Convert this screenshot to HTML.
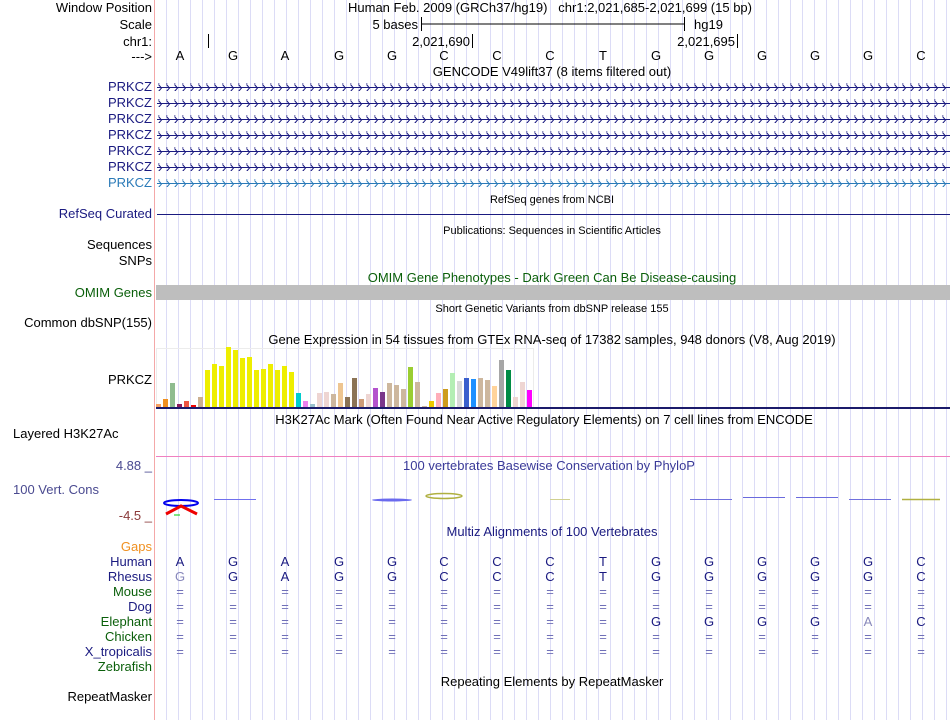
<!DOCTYPE html>
<html><head><meta charset="utf-8"><style>
*{margin:0;padding:0}
body{width:950px;height:720px;background:#fff;position:relative;overflow:hidden;font-family:"Liberation Sans",sans-serif;font-size:13px;color:#000}
#grid{position:absolute;left:155px;top:0;width:795px;height:720px;background:repeating-linear-gradient(to right,transparent 0,transparent 11px,#dcdcf6 11px,#dcdcf6 12px)}
#sep{position:absolute;left:154px;top:0;width:1px;height:720px;background:#f4a8a8}
.l{position:absolute;right:798px;white-space:nowrap;line-height:14px;text-align:right}
.c{position:absolute;white-space:nowrap;line-height:14px;transform:translateX(-50%)}
.s{font-size:11px}
.nv{color:#1a1a80}
.gr{color:#0a5f0a}
.b{position:absolute;white-space:nowrap;line-height:14px;transform:translateX(-50%)}
svg{position:absolute;left:0;top:0}
</style></head><body>
<div id="grid"></div><div id="sep"></div>
<svg width="950" height="720">
<defs>
<pattern id="chv" x="157" y="-4" width="8" height="8" patternUnits="userSpaceOnUse"><path d="M1.5,0.5 L4.5,4 L1.5,7.5" fill="none" stroke="#1a1a80" stroke-width="1"/></pattern>
<pattern id="chb" x="157" y="-4" width="8" height="8" patternUnits="userSpaceOnUse"><path d="M1.5,0.5 L4.5,4 L1.5,7.5" fill="none" stroke="#2a7ab8" stroke-width="1"/></pattern>
</defs>
<path d="M421.5,17V31M421,24H684M684.5,17V31M208.5,34V48M472.5,34V48M737.5,34V48" stroke="#000" stroke-width="1"/>
<g>
<rect x="157" y="83" width="793" height="8" fill="url(#chv)"/><line x1="157" y1="87.5" x2="950" y2="87.5" stroke="#1a1a80"/>
<rect x="157" y="99" width="793" height="8" fill="url(#chv)"/><line x1="157" y1="103.5" x2="950" y2="103.5" stroke="#1a1a80"/>
<rect x="157" y="115" width="793" height="8" fill="url(#chv)"/><line x1="157" y1="119.5" x2="950" y2="119.5" stroke="#1a1a80"/>
<rect x="157" y="131" width="793" height="8" fill="url(#chv)"/><line x1="157" y1="135.5" x2="950" y2="135.5" stroke="#1a1a80"/>
<rect x="157" y="147" width="793" height="8" fill="url(#chv)"/><line x1="157" y1="151.5" x2="950" y2="151.5" stroke="#1a1a80"/>
<rect x="157" y="163" width="793" height="8" fill="url(#chv)"/><line x1="157" y1="167.5" x2="950" y2="167.5" stroke="#1a1a80"/>
<rect x="157" y="179" width="793" height="8" fill="url(#chb)"/><line x1="157" y1="183.5" x2="950" y2="183.5" stroke="#2a7ab8"/>
</g>
<line x1="157" y1="214.5" x2="950" y2="214.5" stroke="#1a1a80"/>
<rect x="156" y="285" width="794" height="15" fill="#bebebe"/>
<rect x="156.5" y="348.5" width="377" height="59" fill="none" stroke="#ececec"/>
<g>
<rect x="156" y="404" width="5" height="3" fill="#f8a060"/>
<rect x="163" y="399" width="5" height="8" fill="#f09020"/>
<rect x="170" y="383" width="5" height="24" fill="#8fbc8f"/>
<rect x="177" y="404" width="5" height="3" fill="#8b1a5a"/>
<rect x="184" y="401" width="5" height="6" fill="#ee5540"/>
<rect x="191" y="405" width="5" height="2" fill="#ee0000"/>
<rect x="198" y="397" width="5" height="10" fill="#ccb090"/>
<rect x="205" y="370" width="5" height="37" fill="#eeee00"/>
<rect x="212" y="364" width="5" height="43" fill="#eeee00"/>
<rect x="219" y="366" width="5" height="41" fill="#eeee00"/>
<rect x="226" y="347" width="5" height="60" fill="#eeee00"/>
<rect x="233" y="350" width="5" height="57" fill="#eeee00"/>
<rect x="240" y="358" width="5" height="49" fill="#eeee00"/>
<rect x="247" y="357" width="5" height="50" fill="#eeee00"/>
<rect x="254" y="370" width="5" height="37" fill="#eeee00"/>
<rect x="261" y="369" width="5" height="38" fill="#eeee00"/>
<rect x="268" y="364" width="5" height="43" fill="#eeee00"/>
<rect x="275" y="370" width="5" height="37" fill="#eeee00"/>
<rect x="282" y="366" width="5" height="41" fill="#eeee00"/>
<rect x="289" y="372" width="5" height="35" fill="#eeee00"/>
<rect x="296" y="393" width="5" height="14" fill="#00cdcd"/>
<rect x="303" y="401" width="5" height="6" fill="#ee82ee"/>
<rect x="310" y="404" width="5" height="3" fill="#9ac0cd"/>
<rect x="317" y="393" width="5" height="14" fill="#eed5d2"/>
<rect x="324" y="392" width="5" height="15" fill="#eed5d2"/>
<rect x="331" y="394" width="5" height="13" fill="#cdb79e"/>
<rect x="338" y="383" width="5" height="24" fill="#eec591"/>
<rect x="345" y="397" width="5" height="10" fill="#8b7355"/>
<rect x="352" y="378" width="5" height="29" fill="#8b7355"/>
<rect x="359" y="399" width="5" height="8" fill="#cd9b77"/>
<rect x="366" y="394" width="5" height="13" fill="#eed5d2"/>
<rect x="373" y="388" width="5" height="19" fill="#b452cd"/>
<rect x="380" y="392" width="5" height="15" fill="#7a378b"/>
<rect x="387" y="383" width="5" height="24" fill="#cdb79e"/>
<rect x="394" y="385" width="5" height="22" fill="#cdb79e"/>
<rect x="401" y="389" width="5" height="18" fill="#cdb79e"/>
<rect x="408" y="367" width="5" height="40" fill="#9acd32"/>
<rect x="415" y="382" width="5" height="25" fill="#cdb79e"/>
<rect x="422" y="406" width="5" height="1" fill="#cdb79e"/>
<rect x="429" y="401" width="5" height="6" fill="#eec900"/>
<rect x="436" y="393" width="5" height="14" fill="#ffaeb9"/>
<rect x="443" y="389" width="5" height="18" fill="#cd9b1d"/>
<rect x="450" y="373" width="5" height="34" fill="#b4eeb4"/>
<rect x="457" y="381" width="5" height="26" fill="#d9d9d9"/>
<rect x="464" y="378" width="5" height="29" fill="#3a5fcd"/>
<rect x="471" y="379" width="5" height="28" fill="#1e90ff"/>
<rect x="478" y="378" width="5" height="29" fill="#cdb79e"/>
<rect x="485" y="380" width="5" height="27" fill="#cdb79e"/>
<rect x="492" y="386" width="5" height="21" fill="#ffd39b"/>
<rect x="499" y="360" width="5" height="47" fill="#a6a6a6"/>
<rect x="506" y="370" width="5" height="37" fill="#008b45"/>
<rect x="513" y="397" width="5" height="10" fill="#eed5d2"/>
<rect x="520" y="382" width="5" height="25" fill="#eed5d2"/>
<rect x="527" y="390" width="5" height="17" fill="#ff00ff"/>
</g>
<rect x="156" y="407" width="794" height="2" fill="#1a1a6a"/>
<line x1="156" y1="456.5" x2="950" y2="456.5" stroke="#f080c0"/>
<ellipse cx="181" cy="503" rx="17" ry="3" fill="none" stroke="#0000ee" stroke-width="2"/>
<path d="M166,514 L181,506 L197,514" fill="none" stroke="#ee0000" stroke-width="3"/>
<line x1="174" y1="515" x2="180" y2="515" stroke="#00cc00"/>
<line x1="214" y1="499.5" x2="256" y2="499.5" stroke="#7070ee"/>
<ellipse cx="392" cy="500" rx="20" ry="1.5" fill="#6a6aee"/>
<ellipse cx="444" cy="496" rx="18" ry="2.5" fill="none" stroke="#b0b040" stroke-width="1.5"/>
<line x1="550" y1="499.5" x2="570" y2="499.5" stroke="#d0d090"/>
<line x1="690" y1="499.5" x2="732" y2="499.5" stroke="#7070dd"/>
<line x1="743" y1="497.5" x2="785" y2="497.5" stroke="#6a6add"/>
<line x1="796" y1="497.5" x2="838" y2="497.5" stroke="#6a6add"/>
<line x1="849" y1="499.5" x2="891" y2="499.5" stroke="#7070dd"/>
<line x1="902" y1="499.5" x2="940" y2="499.5" stroke="#b0b040" stroke-width="1.5"/>
</svg>

<div class="l" style="top:1px">Window Position</div>
<div class="l" style="top:18px">Scale</div>
<div class="l" style="top:35px">chr1:</div>
<div class="l" style="top:50px">---&gt;</div>
<div class="c" style="top:1px;left:550px">Human Feb. 2009 (GRCh37/hg19) &nbsp; chr1:2,021,685-2,021,699 (15 bp)</div>
<div class="l" style="top:18px;right:532px">5 bases</div>
<div style="position:absolute;top:18px;left:694px;line-height:14px">hg19</div>
<div class="l" style="top:35px;right:480px">2,021,690</div>
<div class="l" style="top:35px;right:215px">2,021,695</div>
<div class="b" style="top:49px;left:180px">A</div><div class="b" style="top:49px;left:233px">G</div><div class="b" style="top:49px;left:285px">A</div><div class="b" style="top:49px;left:339px">G</div><div class="b" style="top:49px;left:392px">G</div><div class="b" style="top:49px;left:444px">C</div><div class="b" style="top:49px;left:497px">C</div><div class="b" style="top:49px;left:550px">C</div><div class="b" style="top:49px;left:603px">T</div><div class="b" style="top:49px;left:656px">G</div><div class="b" style="top:49px;left:709px">G</div><div class="b" style="top:49px;left:762px">G</div><div class="b" style="top:49px;left:815px">G</div><div class="b" style="top:49px;left:868px">G</div><div class="b" style="top:49px;left:921px">C</div>
<div class="c" style="top:65px;left:552px">GENCODE V49lift37 (8 items filtered out)</div>
<div class="l nv" style="top:80px">PRKCZ</div>
<div class="l nv" style="top:96px">PRKCZ</div>
<div class="l nv" style="top:112px">PRKCZ</div>
<div class="l nv" style="top:128px">PRKCZ</div>
<div class="l nv" style="top:144px">PRKCZ</div>
<div class="l nv" style="top:160px">PRKCZ</div>
<div class="l" style="top:176px;color:#2a7ab8">PRKCZ</div>
<div class="c s" style="top:193px;left:552px">RefSeq genes from NCBI</div>
<div class="l nv" style="top:207px">RefSeq Curated</div>
<div class="c s" style="top:224px;left:552px">Publications: Sequences in Scientific Articles</div>
<div class="l" style="top:238px">Sequences</div>
<div class="l" style="top:254px">SNPs</div>
<div class="c gr" style="top:271px;left:552px">OMIM Gene Phenotypes - Dark Green Can Be Disease-causing</div>
<div class="l gr" style="top:286px">OMIM Genes</div>
<div class="c s" style="top:302px;left:552px">Short Genetic Variants from dbSNP release 155</div>
<div class="l" style="top:316px">Common dbSNP(155)</div>
<div class="c" style="top:333px;left:552px">Gene Expression in 54 tissues from GTEx RNA-seq of 17382 samples, 948 donors (V8, Aug 2019)</div>
<div class="l" style="top:373px">PRKCZ</div>
<div class="c" style="top:413px;left:544px">H3K27Ac Mark (Often Found Near Active Regulatory Elements) on 7 cell lines from ENCODE</div>
<div style="position:absolute;top:427px;left:13px;line-height:14px">Layered H3K27Ac</div>
<div class="l" style="top:459px;color:#4a4a90">4.88 _</div>
<div class="c" style="top:459px;left:549px;color:#3a3a98">100 vertebrates Basewise Conservation by PhyloP</div>
<div style="position:absolute;top:483px;left:13px;line-height:14px;color:#4a4a90">100 Vert. Cons</div>
<div class="l" style="top:509px;color:#8b3a3a">-4.5 _</div>
<div class="c nv" style="top:525px;left:552px">Multiz Alignments of 100 Vertebrates</div>
<div class="l" style="top:540px;color:#f09020">Gaps</div>
<div class="l nv" style="top:555px">Human</div>
<div class="l nv" style="top:570px">Rhesus</div>
<div class="l gr" style="top:585px">Mouse</div>
<div class="l nv" style="top:600px">Dog</div>
<div class="l gr" style="top:615px">Elephant</div>
<div class="l gr" style="top:630px">Chicken</div>
<div class="l nv" style="top:645px">X_tropicalis</div>
<div class="l gr" style="top:660px">Zebrafish</div>
<div class="c" style="top:675px;left:552px">Repeating Elements by RepeatMasker</div>
<div class="l" style="top:690px">RepeatMasker</div>

<div style="color:#1a1a80">
<div class="b" style="top:555px;left:180px">A</div><div class="b" style="top:555px;left:233px">G</div><div class="b" style="top:555px;left:285px">A</div><div class="b" style="top:555px;left:339px">G</div><div class="b" style="top:555px;left:392px">G</div><div class="b" style="top:555px;left:444px">C</div><div class="b" style="top:555px;left:497px">C</div><div class="b" style="top:555px;left:550px">C</div><div class="b" style="top:555px;left:603px">T</div><div class="b" style="top:555px;left:656px">G</div><div class="b" style="top:555px;left:709px">G</div><div class="b" style="top:555px;left:762px">G</div><div class="b" style="top:555px;left:815px">G</div><div class="b" style="top:555px;left:868px">G</div><div class="b" style="top:555px;left:921px">C</div>
<div class="b" style="top:570px;left:180px;color:#8888bb">G</div><div class="b" style="top:570px;left:233px">G</div><div class="b" style="top:570px;left:285px">A</div><div class="b" style="top:570px;left:339px">G</div><div class="b" style="top:570px;left:392px">G</div><div class="b" style="top:570px;left:444px">C</div><div class="b" style="top:570px;left:497px">C</div><div class="b" style="top:570px;left:550px">C</div><div class="b" style="top:570px;left:603px">T</div><div class="b" style="top:570px;left:656px">G</div><div class="b" style="top:570px;left:709px">G</div><div class="b" style="top:570px;left:762px">G</div><div class="b" style="top:570px;left:815px">G</div><div class="b" style="top:570px;left:868px">G</div><div class="b" style="top:570px;left:921px">C</div>
</div>
<div style="color:#7070b8">
<div style="position:absolute;left:0;top:585px;width:950px;height:15px"><div class="b" style="left:180px">=</div><div class="b" style="left:233px">=</div><div class="b" style="left:285px">=</div><div class="b" style="left:339px">=</div><div class="b" style="left:392px">=</div><div class="b" style="left:444px">=</div><div class="b" style="left:497px">=</div><div class="b" style="left:550px">=</div><div class="b" style="left:603px">=</div><div class="b" style="left:656px">=</div><div class="b" style="left:709px">=</div><div class="b" style="left:762px">=</div><div class="b" style="left:815px">=</div><div class="b" style="left:868px">=</div><div class="b" style="left:921px">=</div></div>
<div style="position:absolute;left:0;top:600px;width:950px;height:15px"><div class="b" style="left:180px">=</div><div class="b" style="left:233px">=</div><div class="b" style="left:285px">=</div><div class="b" style="left:339px">=</div><div class="b" style="left:392px">=</div><div class="b" style="left:444px">=</div><div class="b" style="left:497px">=</div><div class="b" style="left:550px">=</div><div class="b" style="left:603px">=</div><div class="b" style="left:656px">=</div><div class="b" style="left:709px">=</div><div class="b" style="left:762px">=</div><div class="b" style="left:815px">=</div><div class="b" style="left:868px">=</div><div class="b" style="left:921px">=</div></div>
<div style="position:absolute;left:0;top:615px;width:950px;height:15px"><div class="b" style="left:180px">=</div><div class="b" style="left:233px">=</div><div class="b" style="left:285px">=</div><div class="b" style="left:339px">=</div><div class="b" style="left:392px">=</div><div class="b" style="left:444px">=</div><div class="b" style="left:497px">=</div><div class="b" style="left:550px">=</div><div class="b" style="left:603px">=</div><div class="b" style="left:656px;color:#1a1a80">G</div><div class="b" style="left:709px;color:#1a1a80">G</div><div class="b" style="left:762px;color:#1a1a80">G</div><div class="b" style="left:815px;color:#1a1a80">G</div><div class="b" style="left:868px;color:#8888bb">A</div><div class="b" style="left:921px;color:#1a1a80">C</div></div>
<div style="position:absolute;left:0;top:630px;width:950px;height:15px"><div class="b" style="left:180px">=</div><div class="b" style="left:233px">=</div><div class="b" style="left:285px">=</div><div class="b" style="left:339px">=</div><div class="b" style="left:392px">=</div><div class="b" style="left:444px">=</div><div class="b" style="left:497px">=</div><div class="b" style="left:550px">=</div><div class="b" style="left:603px">=</div><div class="b" style="left:656px">=</div><div class="b" style="left:709px">=</div><div class="b" style="left:762px">=</div><div class="b" style="left:815px">=</div><div class="b" style="left:868px">=</div><div class="b" style="left:921px">=</div></div>
<div style="position:absolute;left:0;top:645px;width:950px;height:15px"><div class="b" style="left:180px">=</div><div class="b" style="left:233px">=</div><div class="b" style="left:285px">=</div><div class="b" style="left:339px">=</div><div class="b" style="left:392px">=</div><div class="b" style="left:444px">=</div><div class="b" style="left:497px">=</div><div class="b" style="left:550px">=</div><div class="b" style="left:603px">=</div><div class="b" style="left:656px">=</div><div class="b" style="left:709px">=</div><div class="b" style="left:762px">=</div><div class="b" style="left:815px">=</div><div class="b" style="left:868px">=</div><div class="b" style="left:921px">=</div></div>
</div>
</body></html>
